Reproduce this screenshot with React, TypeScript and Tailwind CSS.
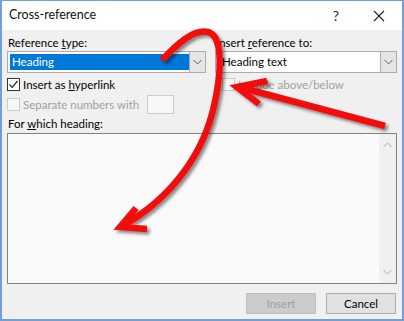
import React from "react";

const font = { fontFamily: 'Lato, "Noto Sans", Arial, sans-serif' };

function Chevron({ up = false, color = "#606060" }: { up?: boolean; color?: string }) {
  return (
    <svg width="9" height="6" viewBox="0 0 9 6">
      <path d={up ? "M0.5 5 L4.5 1 L8.5 5" : "M0.5 1 L4.5 5 L8.5 1"} fill="none" stroke={color} strokeWidth="1" />
    </svg>
  );
}

function CheckBox({ checked, disabled }: { checked?: boolean; disabled?: boolean }) {
  return (
    <div
      className={
        "w-[13px] h-[13px] border flex items-center justify-center shrink-0 " +
        (disabled ? "border-[#cccccc] bg-[#f7f7f7]" : "border-[#333333] bg-white")
      }
    >
      {checked && (
        <svg width="11" height="11" viewBox="0 0 11 11">
          <path d="M1.5 5.5 L4.2 8.3 L9.5 2" fill="none" stroke="#222" strokeWidth="1.2" />
        </svg>
      )}
    </div>
  );
}

export default function App() {
  return (
    <div
      className="relative w-[404px] h-[321px] bg-[#f0f0f0] border-x-2 border-b-2 border-t border-[#6f9fd8] flex flex-col text-[11.5px] text-[#000] overflow-hidden"
      style={font}
    >
      {/* title bar */}
      <div className="h-[29px] bg-white flex items-center shrink-0">
        <div className="pl-[7px] text-[12.5px] text-[#111]">Cross-reference</div>
        <div className="ml-auto flex items-center">
          <div className="w-[40px] text-center text-[14px] text-[#222] mr-[3px]">?</div>
          <div className="w-[40px] flex justify-center mr-[3px]">
            <svg width="12" height="12" viewBox="0 0 12 12">
              <path d="M1 1 L11 11 M11 1 L1 11" stroke="#222" strokeWidth="1.1" />
            </svg>
          </div>
        </div>
      </div>

      {/* body */}
      <div className="flex flex-col pl-[5px] pr-[5px] pt-[5px]">
        <div className="flex gap-[9px]">
          {/* left column */}
          <div className="w-[199px] flex flex-col">
            <div className="h-[16px] leading-[16px] pl-[1px]">
              Reference <span className="underline">t</span>ype:
            </div>
            <div className="h-[22px] border border-[#acacac] bg-white flex items-center p-[2px]">
              <div className="flex-1 h-full bg-[#0078d7] text-white flex items-center pl-[2px]">Heading</div>
              <div className="w-[16px] h-[20px] -mr-[2px] border-l border-[#acacac] bg-[#e5e5e5] flex items-center justify-center">
                <Chevron />
              </div>
            </div>
            <div className="h-[19px] flex items-center gap-[3px] mt-[2px]">
              <CheckBox checked />
              <span className="whitespace-nowrap">
                Insert as <span className="underline">h</span>yperlink
              </span>
            </div>
          </div>
          {/* right column */}
          <div className="w-[182px] flex flex-col">
            <div className="h-[16px] leading-[16px] pl-[1px]">
              Insert <span className="underline">r</span>eference to:
            </div>
            <div className="h-[22px] border border-[#acacac] bg-white flex items-center">
              <div className="flex-1 pl-[6px]">Heading text</div>
              <div className="w-[16px] h-[20px] border-l border-[#acacac] bg-[#e5e5e5] flex items-center justify-center">
                <Chevron />
              </div>
            </div>
            <div className="h-[19px] flex items-center gap-[3px] mt-[2px] pl-[7px] text-[#a0a0a0]">
              <CheckBox disabled />
              <span className="whitespace-nowrap">Include above/below</span>
            </div>
          </div>
        </div>

        <div className="h-[21px] flex items-center gap-[3px] text-[#a0a0a0]">
          <CheckBox disabled />
          <span className="w-[121px] whitespace-nowrap">Separate numbers with</span>
          <div className="w-[27px] h-[19px] border border-[#cccccc] bg-[#f7f7f7]" />
        </div>

        <div className="h-[16px] leading-[16px] pl-[1px] mt-[1px]">
          For <span className="underline">w</span>hich heading:
        </div>

        <div className="w-[390px] h-[151px] border border-[#828282] bg-[#fafafa] flex mt-[1px]">
          <div className="flex-1" />
          <div className="w-[17px] bg-[#f0f0f0] flex flex-col items-center justify-between py-[8px]">
            <Chevron up color="#a8a8a8" />
            <Chevron color="#a8a8a8" />
          </div>
        </div>

        <div className="flex justify-end gap-[10px] mt-[9px] pr-[1px]">
          <div className="w-[70px] h-[21px] bg-[#cccccc] border border-[#bfbfbf] text-[#a0a0a0] flex items-center justify-center">
            Insert
          </div>
          <div className="w-[70px] h-[21px] bg-[#e1e1e1] border border-[#adadad] flex items-center justify-center">
            Cancel
          </div>
        </div>
      </div>

      {/* red annotation arrows */}
      <svg className="absolute left-0 top-0 pointer-events-none" width="404" height="321" viewBox="0 0 404 321">
        <defs>
          <filter id="sh" x="-20%" y="-20%" width="140%" height="140%">
            <feDropShadow dx="2.5" dy="2.5" stdDeviation="1.5" floodColor="#000" floodOpacity="0.45" />
          </filter>
        </defs>
        <g filter="url(#sh)" fill="none" stroke="#f20c0c" strokeWidth="6.5" strokeLinejoin="miter">
          <path d="M160 59 C176 42 192 28 206 31 C222 35 219 75 212 105 C202 150 172 196 120 225" />
          <path d="M134 207 L118 226 L145 228" />
          <path d="M383 125 L237 86" />
          <path d="M265 80 L235 86 L257 103" />
        </g>
      </svg>
    </div>
  );
}
